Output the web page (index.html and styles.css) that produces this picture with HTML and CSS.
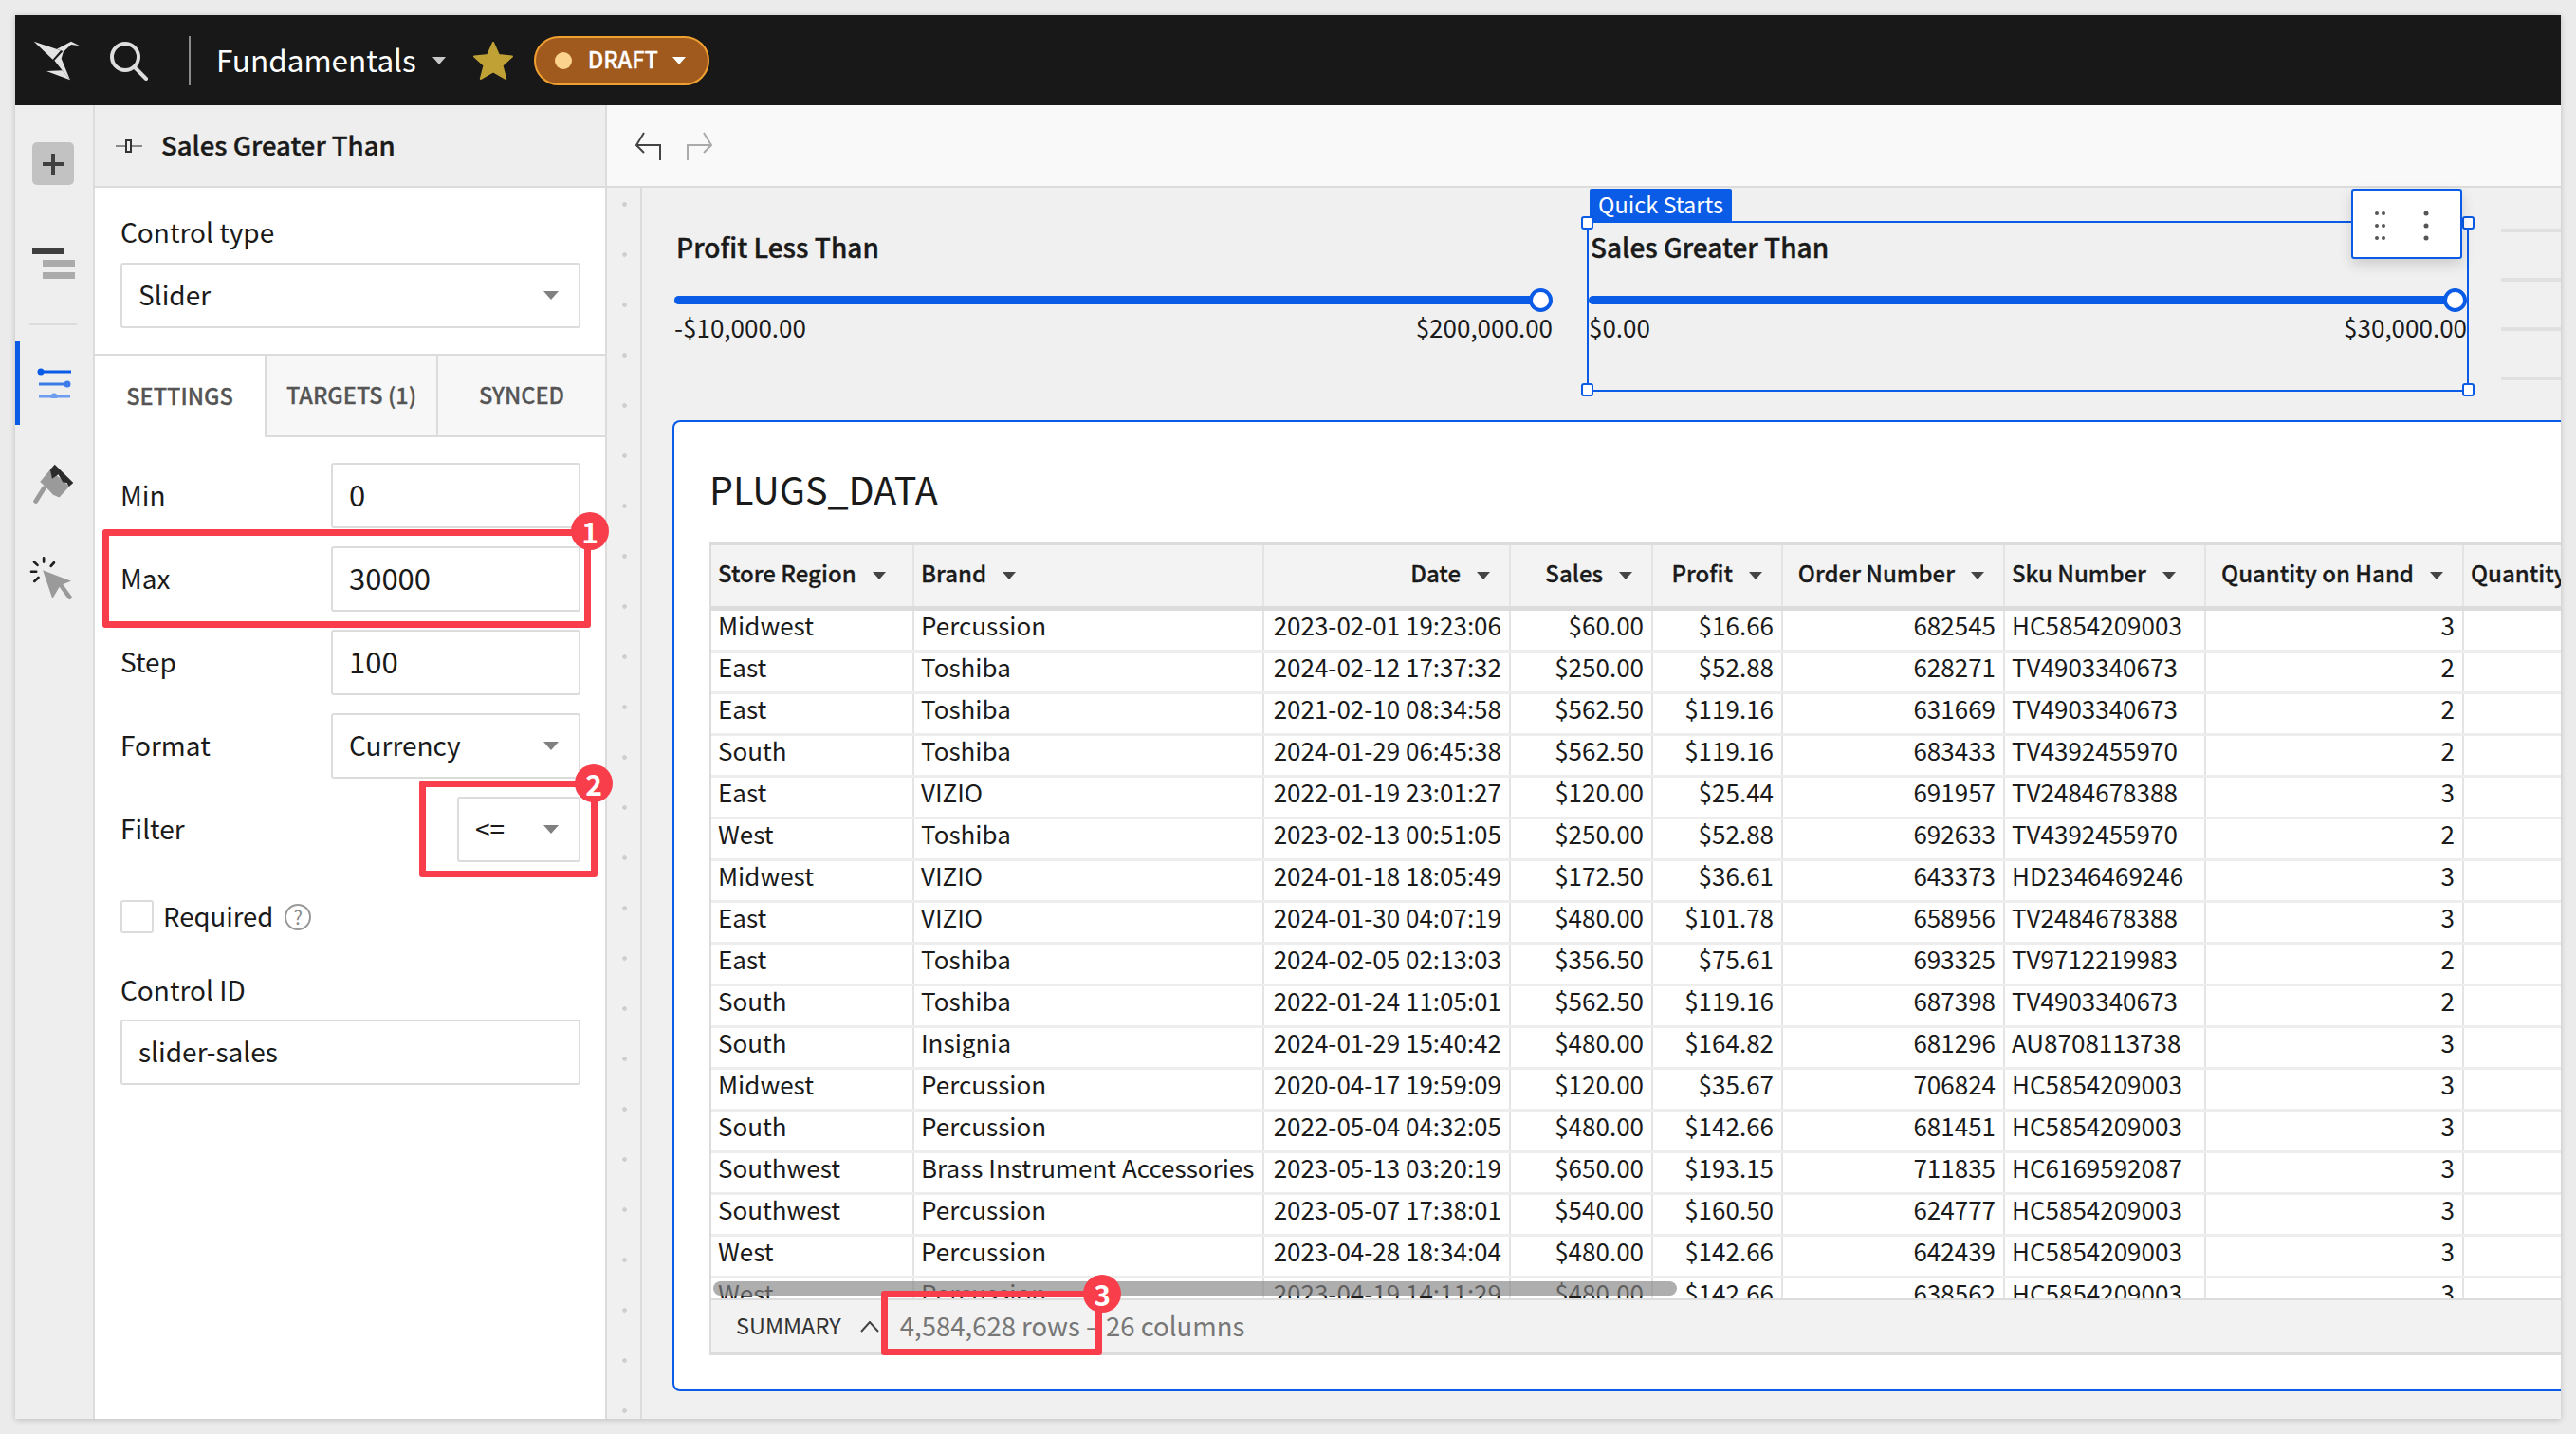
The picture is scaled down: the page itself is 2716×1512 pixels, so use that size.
FILE: index.html
```html
<!DOCTYPE html>
<html lang="en">

<head>
	<meta charset="UTF-8">
	<title>Fundamentals</title>
	<link rel="stylesheet" href="styles.css">
</head>

<body>
	<div class="app">
		<header class="topbar">
			<svg class="logo" viewBox="40 60 150 135">
				<polygon points="45,68 130,97 105,125" fill="#e3e3e3" />
				<polygon points="118,92 163,68 191,82 163,78 140,100" fill="#e3e3e3" />
				<polygon points="140,96 132,122 160,190 135,160 110,128" fill="#e3e3e3" />
				<polygon points="85,162 135,160 160,190" fill="#e3e3e3" />
			</svg>
			<svg class="search" viewBox="0 0 42 42" fill="none" stroke="#dedede" stroke-width="4">
				<circle cx="17" cy="17" r="14" />
				<path d="M27 28 L39 40" stroke-linecap="round" />
			</svg>
			<span class="top-divider"></span>
			<span class="doc-title">Fundamentals</span>
			<span class="caret caret-top"></span>
			<svg class="star" viewBox="0 0 40 40" preserveAspectRatio="none">
				<path d="M20 1 L25.5 14 L39 15.500 L29 25 L32.5 39 L20 31.5 L7.500 39 L11 25 L1 15.500 L14.500 14 Z" fill="#bfa136" stroke="#bfa136" stroke-width="2" stroke-linejoin="round" />
			</svg>
			<button class="draft">
				<span class="draft-dot"></span>
				<span>DRAFT</span>
				<span class="caret caret-white"></span>
			</button>
		</header>

		<div class="main">
			<nav class="rail">
				<div class="rail-add">
					<svg viewBox="0 0 24 24" width="24" height="24">
						<path d="M12 1 V23 M1 12 H23" stroke="#404040" stroke-width="4" />
					</svg>
				</div>
				<svg class="rail-bars" viewBox="0 0 45 33">
					<rect x="0" y="0" width="33" height="7" fill="#3f3f3f" />
					<rect x="11" y="13" width="34" height="7" fill="#ababab" />
					<rect x="11" y="26" width="34" height="7" fill="#ababab" />
				</svg>
				<div class="rail-divider"></div>
				<div class="rail-active">
					<svg viewBox="0 0 36 32" width="36" height="32">
						<path d="M2 4 H36" stroke="#0a5be5" stroke-width="3" />
						<circle cx="4" cy="4" r="3.500" fill="#0a5be5" />
						<path d="M2 17 H34" stroke="#3b7cea" stroke-width="3" />
						<circle cx="32" cy="17" r="3.500" fill="#3b7cea" />
						<path d="M2 30 H35" stroke="#6c9def" stroke-width="3" />
						<circle cx="18" cy="30" r="3.500" fill="#6c9def" />
					</svg>
				</div>
				<svg class="rail-brush" viewBox="45 55 125 125">
					<path d="M97 73 L156 124 L125 158 L106 150 L92 135 L66 110 Z" fill="#9a9a9a" />
					<path d="M78 130 L53 170" stroke="#9a9a9a" stroke-width="14" stroke-linecap="round" />
					<path d="M111 57 L168 113 L155 125 L148 113 L136 112 L122 88 L103 101 L97 73 Z" fill="#2b2b2b" />
				</svg>
				<svg class="rail-cursor" viewBox="30 355 135 140">
					<polygon points="72,398 163,433 128,447 103,490" fill="#9a9a9a" />
					<path d="M125 440 L158 485" stroke="#9a9a9a" stroke-width="14" stroke-linecap="round" />
					<path d="M75 359 V372 M98 385 L108 374 M44 372 L55 382 M35 403 H51 M45 434 L58 422" stroke="#1d1d1d" stroke-width="8" stroke-linecap="round" />
				</svg>
			</nav>

			<aside class="panel">
				<div class="panel-head">
					<svg class="panel-icon" viewBox="0 0 30 16" width="30" height="16">
						<path d="M1 8 H29" stroke="#8a8a8a" stroke-width="2" />
						<rect x="12" y="2" width="5" height="12" fill="#eee" stroke="#333" stroke-width="2" />
					</svg>
					<span class="panel-name">Sales Greater Than</span>
				</div>
				<div class="panel-type">
					<div class="field-label">Control type</div>
					<div class="input select"><span class="input-text">Slider</span><span class="caret"></span></div>
				</div>
				<div class="tabs">
					<div class="tab tab-on">SETTINGS</div>
					<div class="tab">TARGETS (1)</div>
					<div class="tab tab-last">SYNCED</div>
				</div>
				<div class="form">
					<div class="form-row">
						<label>Min</label>
						<div class="input"><span class="input-text input-num">0</span></div>
					</div>
					<div class="form-row">
						<label>Max</label>
						<div class="input"><span class="input-text input-num">30000</span></div>
					</div>
					<div class="form-row">
						<label>Step</label>
						<div class="input"><span class="input-text input-num">100</span></div>
					</div>
					<div class="form-row">
						<label>Format</label>
						<div class="input select"><span class="input-text">Currency</span><span class="caret"></span></div>
					</div>
					<div class="form-row">
						<label>Filter</label>
						<div class="input select input-short"><span class="input-text">&lt;=</span><span class="caret"></span></div>
					</div>
					<div class="required">
						<span class="check"></span>
						<span class="required-text">Required</span>
						<span class="help">?</span>
					</div>
					<div class="field-label id-label">Control ID</div>
					<div class="input"><span class="input-text">slider-sales</span></div>
				</div>
			</aside>

			<div class="content">
				<div class="toolbar">
					<svg viewBox="670 138 32 34" width="32" height="34" fill="none" stroke="#444" stroke-width="2">
						<path d="M698 170 V154 H673 M681 141 L673 154 L681 162" />
					</svg>
					<svg viewBox="722 138 32 34" width="32" height="34" fill="none" stroke="#aaa" stroke-width="2">
						<path d="M725 170 V154 H750 M742 141 L750 154 L742 162" />
					</svg>
				</div>
				<div class="stage">
					<div class="gutter"></div>
					<div class="canvas">
						<div class="controls">
							<div class="control control-first">
								<div class="control-title">Profit Less Than</div>
								<div class="track"><span class="thumb"></span></div>
								<div class="range"><span>-$10,000.00</span><span>$200,000.00</span></div>
							</div>
							<div class="control control-on">
								<div class="tag">Quick Starts</div>
								<span class="handle handle-tl"></span>
								<span class="handle handle-tr"></span>
								<span class="handle handle-bl"></span>
								<span class="handle handle-br"></span>
								<div class="control-menu">
									<svg viewBox="0 0 74 32" width="74" height="32" fill="#555">
										<circle cx="2" cy="3" r="2" /><circle cx="9" cy="3" r="2" />
										<circle cx="2" cy="16" r="2" /><circle cx="9" cy="16" r="2" />
										<circle cx="2" cy="29" r="2" /><circle cx="9" cy="29" r="2" />
										<circle cx="54" cy="3" r="2.500" /><circle cx="54" cy="16" r="2.500" /><circle cx="54" cy="29" r="2.500" />
									</svg>
								</div>
								<div class="control-title">Sales Greater Than</div>
								<div class="track"><span class="thumb"></span></div>
								<div class="range"><span>$0.00</span><span>$30,000.00</span></div>
							</div>
							<div class="stubs"><span></span><span></span><span></span><span></span></div>
						</div>

						<section class="card">
							<h2 class="card-title">PLUGS_DATA</h2>
							<div class="grid">
								<table>
									<colgroup>
										<col class="c-region"><col class="c-brand"><col class="c-date"><col class="c-sales"><col class="c-profit"><col class="c-order"><col class="c-sku"><col class="c-qty"><col class="c-more">
									</colgroup>
									<thead>
										<tr>
											<th>Store Region<span class="caret caret-dark"></span></th>
											<th>Brand<span class="caret caret-dark"></span></th>
											<th class="num">Date<span class="caret caret-dark"></span></th>
											<th class="num">Sales<span class="caret caret-dark"></span></th>
											<th class="num">Profit<span class="caret caret-dark"></span></th>
											<th class="num">Order Number<span class="caret caret-dark"></span></th>
											<th>Sku Number<span class="caret caret-dark"></span></th>
											<th class="num">Quantity on Hand<span class="caret caret-dark"></span></th>
											<th>Quantity</th>
										</tr>
									</thead>
									<tbody>
										<tr><td>Midwest</td><td>Percussion</td><td class="num">2023-02-01 19:23:06</td><td class="num">$60.00</td><td class="num">$16.66</td><td class="num">682545</td><td>HC5854209003</td><td class="num">3</td><td></td></tr>
										<tr><td>East</td><td>Toshiba</td><td class="num">2024-02-12 17:37:32</td><td class="num">$250.00</td><td class="num">$52.88</td><td class="num">628271</td><td>TV4903340673</td><td class="num">2</td><td></td></tr>
										<tr><td>East</td><td>Toshiba</td><td class="num">2021-02-10 08:34:58</td><td class="num">$562.50</td><td class="num">$119.16</td><td class="num">631669</td><td>TV4903340673</td><td class="num">2</td><td></td></tr>
										<tr><td>South</td><td>Toshiba</td><td class="num">2024-01-29 06:45:38</td><td class="num">$562.50</td><td class="num">$119.16</td><td class="num">683433</td><td>TV4392455970</td><td class="num">2</td><td></td></tr>
										<tr><td>East</td><td>VIZIO</td><td class="num">2022-01-19 23:01:27</td><td class="num">$120.00</td><td class="num">$25.44</td><td class="num">691957</td><td>TV2484678388</td><td class="num">3</td><td></td></tr>
										<tr><td>West</td><td>Toshiba</td><td class="num">2023-02-13 00:51:05</td><td class="num">$250.00</td><td class="num">$52.88</td><td class="num">692633</td><td>TV4392455970</td><td class="num">2</td><td></td></tr>
										<tr><td>Midwest</td><td>VIZIO</td><td class="num">2024-01-18 18:05:49</td><td class="num">$172.50</td><td class="num">$36.61</td><td class="num">643373</td><td>HD2346469246</td><td class="num">3</td><td></td></tr>
										<tr><td>East</td><td>VIZIO</td><td class="num">2024-01-30 04:07:19</td><td class="num">$480.00</td><td class="num">$101.78</td><td class="num">658956</td><td>TV2484678388</td><td class="num">3</td><td></td></tr>
										<tr><td>East</td><td>Toshiba</td><td class="num">2024-02-05 02:13:03</td><td class="num">$356.50</td><td class="num">$75.61</td><td class="num">693325</td><td>TV9712219983</td><td class="num">2</td><td></td></tr>
										<tr><td>South</td><td>Toshiba</td><td class="num">2022-01-24 11:05:01</td><td class="num">$562.50</td><td class="num">$119.16</td><td class="num">687398</td><td>TV4903340673</td><td class="num">2</td><td></td></tr>
										<tr><td>South</td><td>Insignia</td><td class="num">2024-01-29 15:40:42</td><td class="num">$480.00</td><td class="num">$164.82</td><td class="num">681296</td><td>AU8708113738</td><td class="num">3</td><td></td></tr>
										<tr><td>Midwest</td><td>Percussion</td><td class="num">2020-04-17 19:59:09</td><td class="num">$120.00</td><td class="num">$35.67</td><td class="num">706824</td><td>HC5854209003</td><td class="num">3</td><td></td></tr>
										<tr><td>South</td><td>Percussion</td><td class="num">2022-05-04 04:32:05</td><td class="num">$480.00</td><td class="num">$142.66</td><td class="num">681451</td><td>HC5854209003</td><td class="num">3</td><td></td></tr>
										<tr><td>Southwest</td><td>Brass Instrument Accessories</td><td class="num">2023-05-13 03:20:19</td><td class="num">$650.00</td><td class="num">$193.15</td><td class="num">711835</td><td>HC6169592087</td><td class="num">3</td><td></td></tr>
										<tr><td>Southwest</td><td>Percussion</td><td class="num">2023-05-07 17:38:01</td><td class="num">$540.00</td><td class="num">$160.50</td><td class="num">624777</td><td>HC5854209003</td><td class="num">3</td><td></td></tr>
										<tr><td>West</td><td>Percussion</td><td class="num">2023-04-28 18:34:04</td><td class="num">$480.00</td><td class="num">$142.66</td><td class="num">642439</td><td>HC5854209003</td><td class="num">3</td><td></td></tr>
										<tr><td>West</td><td>Percussion</td><td class="num">2023-04-19 14:11:29</td><td class="num">$480.00</td><td class="num">$142.66</td><td class="num">638562</td><td>HC5854209003</td><td class="num">3</td><td></td></tr>
									</tbody>
								</table>
								<div class="scrollbar"></div>
							</div>
							<div class="summary">
								<span class="summary-label">SUMMARY</span>
								<svg viewBox="0 0 20 12" width="20" height="12" fill="none" stroke="#444" stroke-width="2">
									<path d="M1 11 L10 1 L19 11" />
								</svg>
								<span class="summary-count">4,584,628 rows – 26 columns</span>
							</div>
						</section>
					</div>
				</div>
			</div>
		</div>
	</div>

	<!-- red callouts drawn over the screenshot -->
	<div class="callout callout-1"></div>
	<div class="badge badge-1">1</div>
	<div class="callout callout-2"></div>
	<div class="badge badge-2">2</div>
	<div class="callout callout-3"></div>
	<div class="badge badge-3">3</div>
</body>

</html>
```

FILE: styles.css
```css
* {
	box-sizing: border-box;
}

body {
	margin: 0;
	padding: 16px;
	width: 2716px;
	height: 1512px;
	overflow: hidden;
	position: relative;
	background-color: #ebebeb;
	color: #1a1a1a;
	font-family: "Noto Sans CJK JP", "Noto Sans", sans-serif;
	font-size: 28px;
}

.app {
	width: 2684px;
	height: 1480px;
	display: flex;
	flex-direction: column;
	background-color: #f0f0f0;
	box-shadow: 0 1px 6px rgba(0, 0, 0, 0.2);
	overflow: hidden;
}

.caret {
	display: inline-block;
	width: 0;
	height: 0;
	border-left: 8px solid transparent;
	border-right: 8px solid transparent;
	border-top: 9px solid #808080;
}

/* top bar */
.topbar {
	height: 95px;
	flex: none;
	display: flex;
	align-items: center;
	background-color: #181818;
}

.logo {
	width: 50px;
	height: 45px;
	margin-left: 18px;
}

.search {
	width: 42px;
	height: 42px;
	margin-left: 31px;
}

.top-divider {
	width: 2px;
	height: 52px;
	margin-left: 42px;
	background-color: #8a8a8a;
}

.doc-title {
	margin-left: 27px;
	padding-bottom: 4px;
	color: #fff;
	font-size: 31.500px;
	line-height: 44px;
}

.caret-top {
	margin-left: 17px;
	border-left-width: 7px;
	border-right-width: 7px;
	border-top: 8px solid #c8c8c8;
}

.star {
	width: 42px;
	height: 40px;
	margin-left: 29px;
}

.draft {
	display: flex;
	align-items: center;
	width: 185px;
	height: 52px;
	margin-left: 22px;
	padding: 0 0 3px 20px;
	border: 2px solid #f0a030;
	border-radius: 26px;
	background-color: #a05a1e;
	color: #fff;
	font-family: inherit;
	font-size: 23.500px;
	font-weight: 500;
	-webkit-text-stroke: 0.3px #fff;
}

.draft-dot {
	width: 18px;
	height: 18px;
	margin: 3px 17px 0 0;
	border-radius: 50%;
	background-color: #fbd38d;
}

.caret-white {
	margin: 3px 0 0 15px;
	border-left-width: 7px;
	border-right-width: 7px;
	border-top: 8px solid #fff;
}

.main {
	flex: 1;
	display: flex;
	min-height: 0;
}

/* icon rail */
.rail {
	width: 84px;
	flex: none;
	display: flex;
	flex-direction: column;
	align-items: center;
	padding-right: 2px;
	background-color: #eeeeee;
	border-right: 2px solid #dcdcdc;
}

.rail-add {
	width: 44px;
	height: 45px;
	margin-top: 39px;
	display: flex;
	align-items: center;
	justify-content: center;
	border-radius: 5px;
	background-color: #c2c2c2;
}

.rail-bars {
	width: 45px;
	height: 33px;
	margin-top: 66px;
}

.rail-divider {
	width: 50px;
	height: 2px;
	margin-top: 47px;
	background-color: #dcdcdc;
}

.rail-active {
	align-self: stretch;
	height: 88px;
	margin-top: 17px;
	padding-right: 3px;
	display: flex;
	align-items: center;
	justify-content: center;
	border-left: 5px solid #0a5be5;
}

.rail-brush {
	width: 43px;
	height: 43px;
	margin-top: 41px;
}

.rail-cursor {
	width: 45px;
	height: 46px;
	margin-top: 55px;
	margin-right: 6px;
}

/* settings panel */
.panel {
	width: 540px;
	flex: none;
	background-color: #fff;
	border-right: 2px solid #dcdcdc;
}

.panel-head {
	height: 87px;
	display: flex;
	align-items: center;
	gap: 19px;
	padding-left: 21px;
	background-color: #eeeeee;
	border-bottom: 2px solid #dcdcdc;
}

.panel-name {
	padding-bottom: 3px;
	font-size: 27.500px;
	font-weight: 500;
	-webkit-text-stroke: 0.4px #1a1a1a;
}

.panel-type {
	height: 177px;
	padding: 26px 26px 0 27px;
	border-bottom: 2px solid #dcdcdc;
}

.field-label {
	height: 46px;
	padding-bottom: 3px;
	line-height: 40px;
	margin-bottom: 7px;
}

.input {
	height: 69px;
	flex: 1;
	display: flex;
	align-items: center;
	padding-left: 17px;
	background-color: #fff;
	border: 2px solid #dcdcdc;
	border-radius: 3px;
	line-height: 40px;
}

.input-text {
	padding-bottom: 3px;
}

.input-num {
	font-size: 31px;
}

.select {
	justify-content: space-between;
	padding-right: 21px;
}

.tabs {
	height: 86px;
	display: flex;
}

.tab {
	width: 181px;
	display: flex;
	align-items: center;
	justify-content: center;
	padding-bottom: 3px;
	background-color: #f7f7f7;
	border-left: 2px solid #dcdcdc;
	border-bottom: 2px solid #dcdcdc;
	color: #555;
	font-size: 23.500px;
	font-weight: 500;
	-webkit-text-stroke: 0.3px #555;
}

.tab-on {
	width: 179px;
	background-color: #fff;
	border-left: 0;
	border-bottom: 0;
}

.tab-last {
	flex: 1;
}

.form {
	padding: 27px 26px 0 27px;
}

.form-row {
	display: flex;
	align-items: center;
	height: 69px;
	margin-bottom: 19px;
}

.form-row label {
	width: 222px;
	flex: none;
	padding-bottom: 4px;
}

.input-short {
	flex: none;
	width: 130px;
	margin-left: auto;
}

.required {
	display: flex;
	align-items: center;
	height: 35px;
	margin-top: 40px;
}

.required-text {
	padding-bottom: 4px;
	font-size: 27.500px;
}

.check {
	width: 35px;
	height: 35px;
	margin-right: 10px;
	border: 2px solid #dcdcdc;
	border-radius: 3px;
}

.help {
	width: 28px;
	height: 28px;
	margin-left: 12px;
	display: flex;
	align-items: center;
	justify-content: center;
	border: 2px solid #999;
	border-radius: 50%;
	color: #888;
	font-size: 20px;
	line-height: 1;
}

.id-label {
	margin-top: 39px;
	margin-bottom: 6px;
}

.form > .input {
	flex: none;
}

/* right side */
.content {
	flex: 1;
	min-width: 0;
	display: flex;
	flex-direction: column;
}

.toolbar {
	height: 87px;
	flex: none;
	display: flex;
	align-items: center;
	gap: 22px;
	padding-left: 28px;
	background-color: #f9f9f9;
	border-bottom: 2px solid #dcdcdc;
}

.stage {
	flex: 1;
	display: flex;
	min-height: 0;
}

.gutter {
	width: 37px;
	flex: none;
	border-right: 2px solid #dcdcdc;
	background-image: radial-gradient(circle, #cfcfcf 2px, transparent 2.6px);
	background-size: 37px 53px;
	background-position: 0 -9px;
}

.canvas {
	flex: 1;
	min-width: 0;
	padding: 35px 0 0 32px;
}

.controls {
	display: flex;
	align-items: flex-start;
}

.control {
	position: relative;
	height: 180px;
	border: 2px solid transparent;
	padding: 8px 0 0 0;
}

.control-first {
	width: 930px;
}

.control-on {
	width: 930px;
	margin-left: 34px;
	border-color: #0a5be5;
}

.control-title {
	height: 40px;
	padding-left: 2px;
	line-height: 34px;
	font-size: 28px;
	font-weight: 500;
	-webkit-text-stroke: 0.4px #1a1a1a;
}

.track {
	position: relative;
	height: 9px;
	margin: 29px 12px 0 0;
	border-radius: 5px;
	background-color: #0a5be5;
}

.thumb {
	position: absolute;
	right: -12px;
	top: -8px;
	width: 25px;
	height: 25px;
	border: 4px solid #0a5be5;
	border-radius: 50%;
	background-color: #fff;
}

.range {
	display: flex;
	justify-content: space-between;
	margin-top: 7px;
	line-height: 34px;
	font-size: 26px;
}

.tag {
	position: absolute;
	left: 1px;
	top: -36px;
	height: 34px;
	padding: 0 9px;
	background-color: #0a5be5;
	border-radius: 2px 2px 0 0;
	color: #fff;
	font-size: 23.500px;
	line-height: 33px;
}

.handle {
	position: absolute;
	width: 13px;
	height: 14px;
	border: 2px solid #0a5be5;
	border-radius: 3px;
	background-color: #fff;
}

.handle-tl {
	left: -8px;
	top: -7px;
}

.handle-tr {
	right: -8px;
	top: -7px;
}

.handle-bl {
	left: -8px;
	bottom: -7px;
}

.handle-br {
	right: -8px;
	bottom: -7px;
}

.control-menu {
	position: absolute;
	right: 5px;
	top: -36px;
	width: 117px;
	height: 74px;
	padding: 21px 0 0 23px;
	background-color: #fff;
	border: 2px solid #0a5be5;
	border-radius: 3px;
	box-shadow: 0 6px 14px rgba(0, 0, 0, 0.15);
}

.stubs {
	flex: 1;
	display: flex;
	flex-direction: column;
	gap: 48px;
	margin: 8px 0 0 34px;
}

.stubs span {
	height: 4px;
	background-color: #e0e0e0;
}

/* table card */
.card {
	height: 1024px;
	margin-top: 30px;
	padding-left: 37px;
	display: flex;
	flex-direction: column;
	background-color: #fff;
	border: 2px solid #0a5be5;
	border-right: 0;
	border-radius: 8px 0 0 8px;
}

.card-title {
	height: 127px;
	margin: 0;
	padding-top: 45px;
	font-size: 39.500px;
	font-weight: 400;
	line-height: 50px;
}

.grid {
	position: relative;
	height: 797px;
	overflow: hidden;
	border-top: 3px solid #dcdcdc;
	border-left: 2px solid #dcdcdc;
}

table {
	width: 2120px;
	table-layout: fixed;
	border-collapse: collapse;
}

.c-region { width: 213px; }
.c-brand { width: 369px; }
.c-date { width: 260px; }
.c-sales { width: 150px; }
.c-profit { width: 137px; }
.c-order { width: 234px; }
.c-sku { width: 212px; }
.c-qty { width: 272px; }
.c-more { width: 273px; }

th,
td {
	padding: 0 8px 7px 7px;
	border-right: 2px solid #e4e4e4;
	text-align: left;
	white-space: nowrap;
}

th {
	height: 66px;
	background-color: #f3f3f3;
	border-bottom: 5px solid #dcdcdc;
	font-size: 24px;
	font-weight: 500;
	-webkit-text-stroke: 0.3px #1a1a1a;
}

td {
	height: 44px;
	padding-bottom: 12px;
	border-bottom: 3px solid #ededed;
	font-size: 26px;
	line-height: 29px;
}

th.num,
td.num {
	text-align: right;
}

.caret-dark {
	margin-left: 17px;
	margin-right: 12px;
	vertical-align: 3px;
	border-left-width: 7px;
	border-right-width: 7px;
	border-top: 8px solid #444;
}

.scrollbar {
	position: absolute;
	left: 2px;
	bottom: 3px;
	width: 1016px;
	height: 15px;
	border-radius: 8px;
	background-color: rgba(130, 130, 130, 0.65);
}

.summary {
	height: 60px;
	flex: none;
	display: flex;
	align-items: center;
	padding-left: 26px;
	background-color: #f2f2f2;
	border-top: 2px solid #dcdcdc;
	border-left: 2px solid #dcdcdc;
	border-bottom: 3px solid #dcdcdc;
}

.summary-label {
	margin-right: 20px;
	padding-bottom: 3px;
	color: #333;
	font-size: 23.500px;
}

.summary-count {
	margin-left: 22px;
	padding-bottom: 3px;
	color: #777;
	font-size: 27.500px;
}

/* callouts */
.callout {
	position: absolute;
	border: 7px solid #f83e4b;
	border-radius: 3px;
}

.callout-1 {
	left: 108px;
	top: 558px;
	width: 515px;
	height: 104px;
}

.callout-2 {
	left: 442px;
	top: 823px;
	width: 188px;
	height: 102px;
}

.callout-3 {
	left: 929px;
	top: 1361px;
	width: 233px;
	height: 68px;
}

.badge {
	position: absolute;
	width: 40px;
	height: 40px;
	display: flex;
	align-items: center;
	justify-content: center;
	border-radius: 50%;
	background-color: #f83e4b;
	color: #fff;
	font-size: 30px;
	font-weight: 700;
	line-height: 1;
}

.badge-1 {
	left: 602px;
	top: 540px;
}

.badge-2 {
	left: 606px;
	top: 806px;
}

.badge-3 {
	left: 1142px;
	top: 1344px;
}
```
